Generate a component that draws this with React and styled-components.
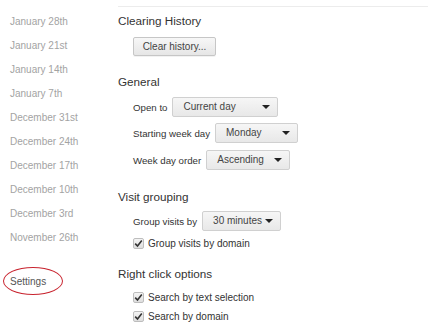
import React from "react";
import styled, { createGlobalStyle } from "styled-components";

const Global = createGlobalStyle`
  html, body { margin: 0; padding: 0; background: #fff; }
  body { font-family: "Liberation Sans", Arial, sans-serif; }
`;

const Page = styled.div`
  display: flex;
  width: 428px;
  height: 324px;
  overflow: hidden;
  background: #fff;
`;

const Sidebar = styled.nav`
  width: 118px;
  flex: none;
  padding: 10px 0 0 10px;
  box-sizing: border-box;
  display: flex;
  flex-direction: column;
`;

const DateItem = styled.div`
  height: 24px;
  line-height: 24px;
  font-size: 10px;
  color: #a3a3a3;
  white-space: nowrap;
`;

const SettingsItem = styled.div`
  position: relative;
  margin-top: 20px;
  height: 24px;
  line-height: 24px;
  font-size: 10px;
  color: #555;
`;

const Circle = styled.span`
  position: absolute;
  left: -7px;
  top: -3px;
  width: 58px;
  height: 26px;
  border: 1.5px solid #c8242f;
  border-radius: 50%;
`;

const Main = styled.main`
  flex: 1;
  margin-top: 6px;
  border-top: 1px solid #ececec;
  display: flex;
  flex-direction: column;
`;

const Heading = styled.h2`
  margin: ${(p) => p.$mt}px 0 0;
  height: 14px;
  line-height: 14px;
  font-size: 11.7px;
  font-weight: normal;
  color: #333;
`;

const Button = styled.button`
  margin: 9px 0 0 15px;
  align-self: flex-start;
  width: 83px;
  height: 19px;
  padding: 0;
  border: 1px solid #c6c6c6;
  border-radius: 2px;
  background: linear-gradient(#f7f7f7, #e6e6e6);
  box-shadow: 0 1px 0 rgba(0,0,0,0.05);
  font-family: inherit;
  font-size: 10px;
  color: #444;
`;

const Row = styled.div`
  display: flex;
  align-items: center;
  margin: ${(p) => p.$mt}px 0 0 15px;
  height: ${(p) => p.$h || 20}px;
  font-size: 10px;
  color: #333;
`;

const Label = styled.span`
  margin-right: 5px;
  font-size: 9.7px;
  white-space: nowrap;
`;

const Select = styled.div`
  position: relative;
  width: ${(p) => p.$w}px;
  height: 20px;
  box-sizing: border-box;
  border: 1px solid #d0d0d0;
  border-radius: 2px;
  background: linear-gradient(#f6f6f6, #e8e8e8);
  padding-left: 10px;
  line-height: 18px;
  font-size: 10px;
  color: #444;
`;

const Arrow = styled.span`
  position: absolute;
  right: 7px;
  top: 7px;
  width: 0;
  height: 0;
  border-left: 4px solid transparent;
  border-right: 4px solid transparent;
  border-top: 4px solid #222;
`;

const Check = styled.span`
  width: 11px;
  height: 11px;
  box-sizing: border-box;
  border: 1px solid #bdbdbd;
  border-radius: 2px;
  background: linear-gradient(#f4f4f4, #dedede);
  margin-right: 4px;
  display: flex;
  align-items: center;
  justify-content: center;
`;

const CheckRow = ({ mt, children }) => (
  <Row $mt={mt} $h={14}>
    <Check>
      <svg width="9" height="9" viewBox="0 0 9 9">
        <path d="M1.2 4.6 L3.5 7 L7.8 1.6" fill="none" stroke="#333" strokeWidth="1.6" />
      </svg>
    </Check>
    <span>{children}</span>
  </Row>
);

const SelectRow = ({ mt, label, value, w }) => (
  <Row $mt={mt}>
    <Label>{label}</Label>
    <Select $w={w}>
      {value}
      <Arrow />
    </Select>
  </Row>
);

const dates = [
  "January 28th",
  "January 21st",
  "January 14th",
  "January 7th",
  "December 31st",
  "December 24th",
  "December 17th",
  "December 10th",
  "December 3rd",
  "November 26th",
];

export default function App() {
  return (
    <Page>
      <Global />
      <Sidebar>
        {dates.map((d) => (
          <DateItem key={d}>{d}</DateItem>
        ))}
        <SettingsItem>
          Settings
          <Circle />
        </SettingsItem>
      </Sidebar>
      <Main>
        <Heading $mt={7}>Clearing History</Heading>
        <Button>Clear history...</Button>
        <Heading $mt={19}>General</Heading>
        <SelectRow mt={8} label="Open to" value="Current day" w={106} />
        <SelectRow mt={6} label="Starting week day" value="Monday" w={83} />
        <SelectRow mt={7} label="Week day order" value="Ascending" w={84} />
        <Heading $mt={20}>Visit grouping</Heading>
        <SelectRow mt={7} label="Group visits by" value="30 minutes" w={79} />
        <CheckRow mt={5}>Group visits by domain</CheckRow>
        <Heading $mt={17}>Right click options</Heading>
        <CheckRow mt={9}>Search by text selection</CheckRow>
        <CheckRow mt={5}>Search by domain</CheckRow>
      </Main>
    </Page>
  );
}
